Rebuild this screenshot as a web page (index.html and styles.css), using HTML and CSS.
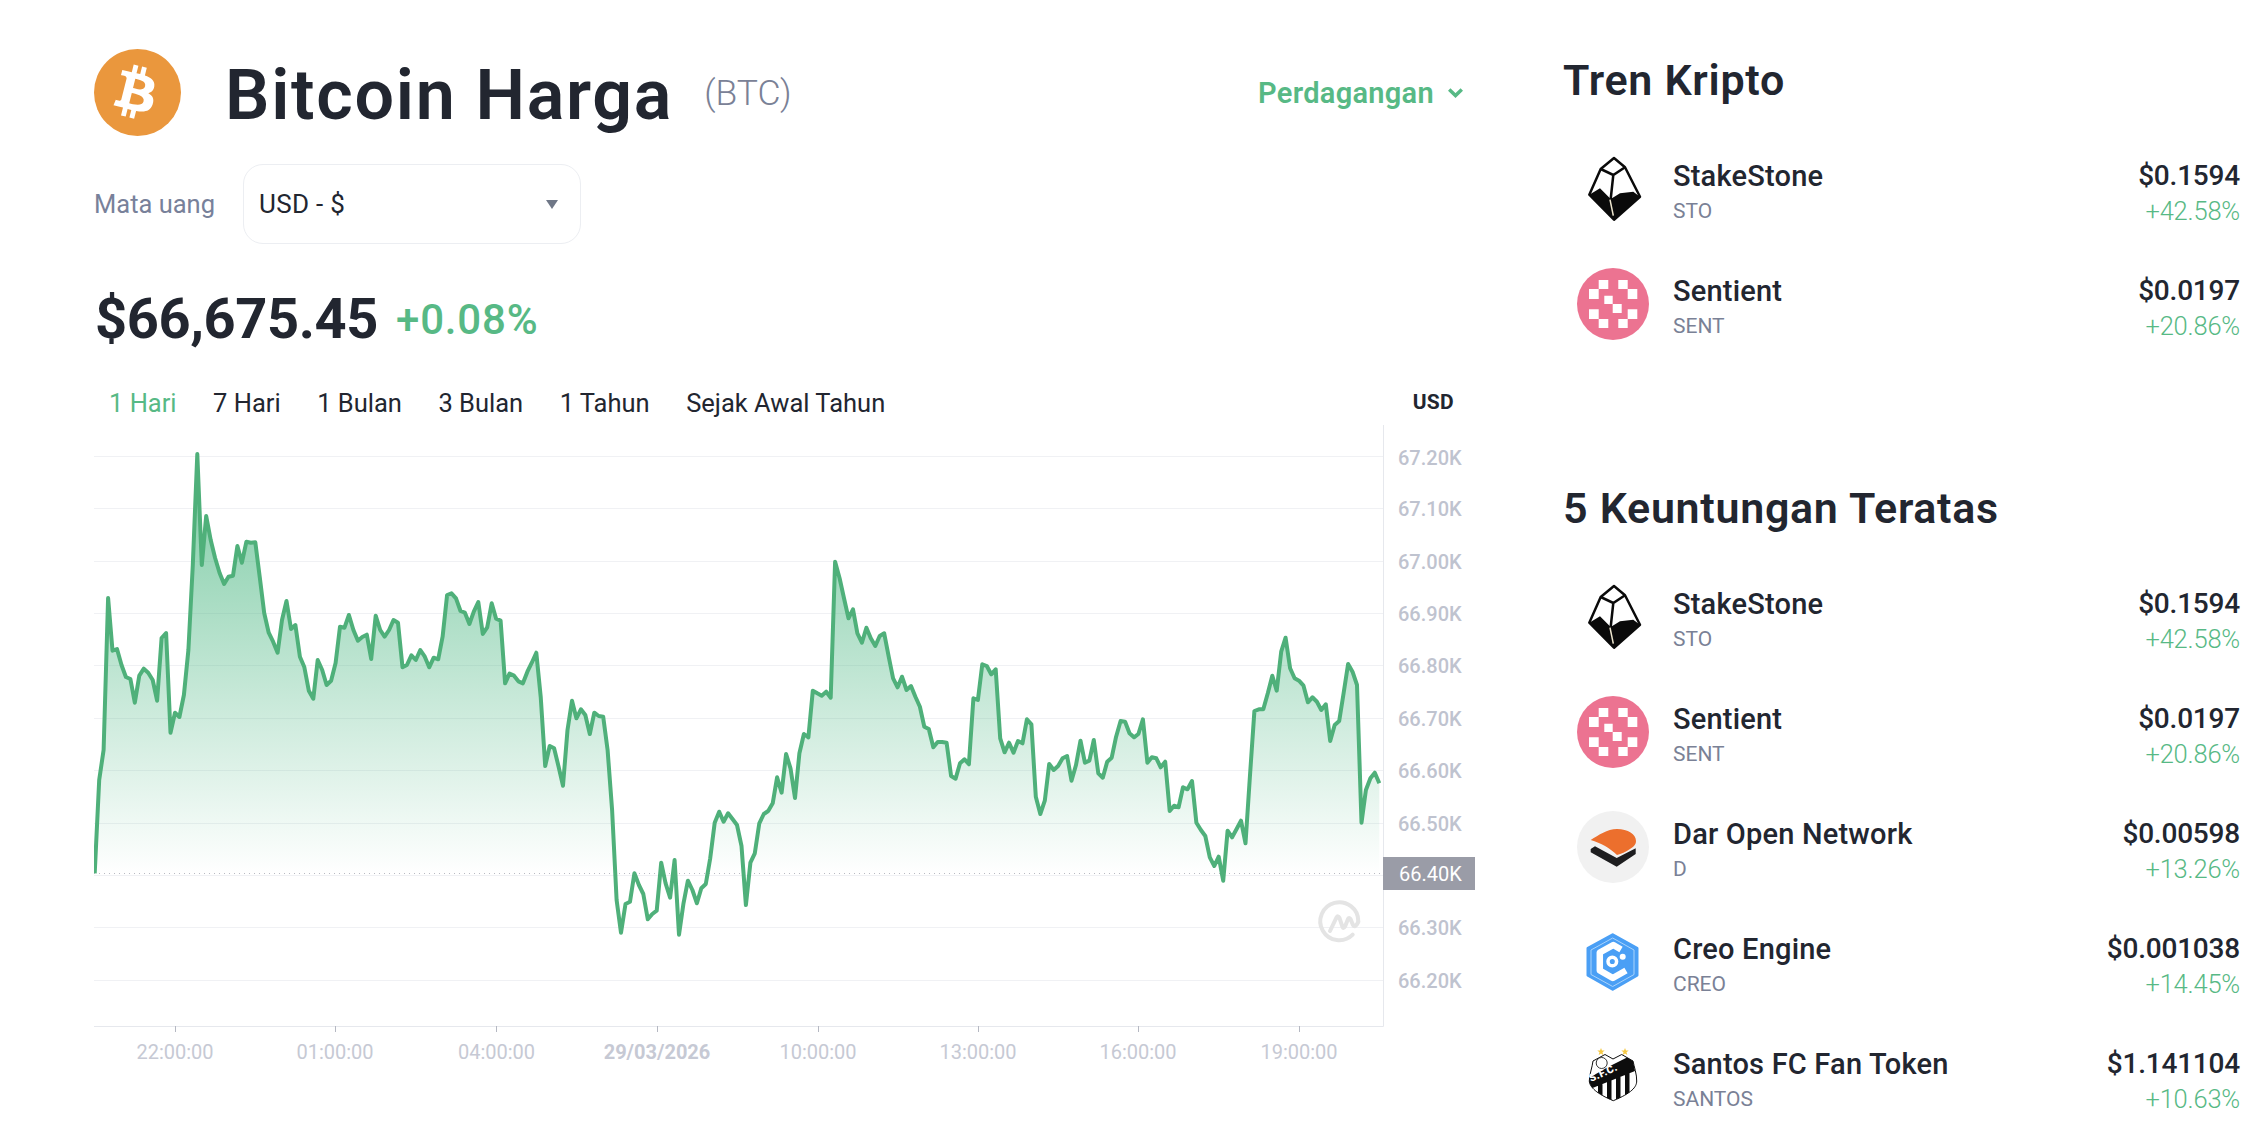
FILE: index.html
```html
<!DOCTYPE html>
<html lang="id">
<head>
<meta charset="utf-8">
<title>Bitcoin Harga</title>
<link rel="stylesheet" href="styles.css">
</head>
<body>
<main class="page">
  <section class="left">
    <header class="title-row">
      <svg class="coin" viewBox="0 0 87 87"><circle cx="43.5" cy="43.5" r="43.5" fill="#ea973d"/><path fill="#fff" d="M60.3 37.3c.9-5.7-3.5-8.8-9.4-10.8l1.9-7.700-4.700-1.200-1.900 7.500-3.700-.9 1.900-7.500-4.700-1.200-1.900 7.700-3-.7-6.500-1.600-1.300 5s3.500.8 3.400.9c1.900.5 2.200 1.700 2.200 2.700l-2.200 8.800-3.100 12.300c-.2.600-.8 1.400-2.100 1.100 0 .1-3.400-.9-3.400-.9l-2.300 5.400 6.100 1.500 3.400.9-2 7.800 4.700 1.200 1.900-7.700 3.700 1-1.900 7.600 4.700 1.200 2-7.800c8 1.500 14 .9 16.500-6.300 2-5.800-.1-9.200-4.300-11.400 3.100-.7 5.400-2.700 6-6.900zM49.600 52.300c-1.400 5.800-11.200 2.700-14.400 1.900l2.600-10.300c3.200.8 13.300 2.400 11.800 8.400zm1.500-15.100c-1.300 5.300-9.500 2.600-12.100 1.900l2.300-9.300c2.700.7 11.200 1.900 9.800 7.400z"/></svg>
      <h1 class="title">Bitcoin Harga</h1>
      <span class="symbol">(BTC)</span>
      <a class="trade">Perdagangan
        <svg class="chev" viewBox="0 0 15 10"><path d="M1.200 1.500L7.500 7.500l6.300-6" fill="none" stroke="currentColor" stroke-width="3.500"/></svg>
      </a>
    </header>
    <div class="currency-row">
      <span class="currency-label">Mata uang</span>
      <div class="select"><span>USD - $</span><i class="caret"></i></div>
    </div>
    <div class="price-row">
      <span class="price">$66,675.45</span>
      <span class="delta">+0.08%</span>
    </div>
    <div class="tabs-row">
      <nav class="tabs">
        <a class="tab active">1 Hari</a><a class="tab">7 Hari</a><a class="tab">1 Bulan</a><a class="tab">3 Bulan</a><a class="tab">1 Tahun</a><a class="tab">Sejak Awal Tahun</a>
      </nav>
      <span class="unit">USD</span>
    </div>
    <div class="chart">
      <svg class="plot" viewBox="94 425 1381 655" width="1381" height="655">
        <defs>
          <linearGradient id="area" gradientUnits="userSpaceOnUse" x1="0" y1="454" x2="0" y2="874">
            <stop offset="0" stop-color="#47b57f" stop-opacity=".72"/>
            <stop offset="1" stop-color="#47b57f" stop-opacity="0"/>
          </linearGradient>
        </defs>
        <g class="grid">
          <path d="M94 456.500H1383M94 508.500H1383M94 561.500H1383M94 613.500H1383M94 665.500H1383M94 718.500H1383M94 770.500H1383M94 823.500H1383M94 875.500H1383M94 927.500H1383M94 980.500H1383"/>
        </g>
        <path id="fill" fill="url(#area)"/>
        <path class="base" d="M94 873.500H1383"/>
        <path id="line" class="line"/>
        <g class="axis">
          <path d="M1383.500 425V1026.500H94"/>
          <path d="M175.500 1026V1032M335.500 1026V1032M496.500 1026V1032M657.500 1026V1032M818.500 1026V1032M978.500 1026V1032M1138.500 1026V1032M1299.500 1026V1032"/>
        </g>
        <g class="ylab">
          <text x="1398" y="465">67.20K</text><text x="1398" y="516">67.10K</text><text x="1398" y="569">67.00K</text><text x="1398" y="621">66.90K</text><text x="1398" y="673">66.80K</text><text x="1398" y="726">66.70K</text><text x="1398" y="778">66.60K</text><text x="1398" y="831">66.50K</text><text x="1398" y="935">66.30K</text><text x="1398" y="988">66.20K</text>
        </g>
        <rect class="tag" x="1383" y="857" width="92" height="33"/>
        <text class="tagtext" x="1399" y="881">66.40K</text>
        <g class="xlab">
          <text x="175" y="1059">22:00:00</text><text x="335" y="1059">01:00:00</text><text x="496.5" y="1059">04:00:00</text><text class="bold" x="657" y="1059">29/03/2026</text><text x="818" y="1059">10:00:00</text><text x="978" y="1059">13:00:00</text><text x="1138" y="1059">16:00:00</text><text x="1299" y="1059">19:00:00</text>
        </g>
        <g class="mark">
          <path d="M1352.700 934.700A19 19 0 1 1 1358.300 921.300"/>
          <path d="M1330 931L1336.500 917.500Q1338 915 1339.500 918L1342.500 927Q1343.500 929 1345 926.500L1348 919Q1349 917 1350.500 919L1353 925Q1355 928.500 1358.300 922"/>
        </g>
      </svg>
    </div>
  </section>

  <aside class="right">
    <h2 class="head">Tren Kripto</h2>
    <ul class="list">
      <li class="row">
        <svg class="ico" viewBox="0 0 72 72"><use href="#sto"/></svg>
        <div class="who"><b>StakeStone</b><small>STO</small></div>
        <div class="val"><b>$0.1594</b><small>+42.58%</small></div>
      </li>
      <li class="row">
        <svg class="ico" viewBox="0 0 72 72"><use href="#sent"/></svg>
        <div class="who"><b>Sentient</b><small>SENT</small></div>
        <div class="val"><b>$0.0197</b><small>+20.86%</small></div>
      </li>
    </ul>
    <h2 class="head second">5 Keuntungan Teratas</h2>
    <ul class="list">
      <li class="row">
        <svg class="ico" viewBox="0 0 72 72"><use href="#sto"/></svg>
        <div class="who"><b>StakeStone</b><small>STO</small></div>
        <div class="val"><b>$0.1594</b><small>+42.58%</small></div>
      </li>
      <li class="row">
        <svg class="ico" viewBox="0 0 72 72"><use href="#sent"/></svg>
        <div class="who"><b>Sentient</b><small>SENT</small></div>
        <div class="val"><b>$0.0197</b><small>+20.86%</small></div>
      </li>
      <li class="row">
        <svg class="ico" viewBox="0 0 72 72"><circle cx="36" cy="36" r="36" fill="#f1f1f1"/><path fill="#1d1d1f" d="M13.700 38L18 35.300 39.700 47 58.700 37.300V43L39.700 55.700 13.700 41.300z"/><path fill="#ec6f2d" d="M13.700 29C22 24 30 18 40 18c11 0 19 5 19 12 0 4-3 6-6 8-4 3-9 5-13 6C33 37 24 32 13.700 29z"/></svg>
        <div class="who"><b>Dar Open Network</b><small>D</small></div>
        <div class="val"><b>$0.00598</b><small>+13.26%</small></div>
      </li>
      <li class="row">
        <svg class="ico" viewBox="0 0 72 72"><path fill="#4a9ff5" stroke="#4a9ff5" stroke-width="3" stroke-linejoin="round" d="M35.700 8.700L60 22.300v27L35.700 63.300 11 49.300v-27z"/><path fill="none" stroke="#a9d3fb" stroke-width="1" d="M35.700 12L57 24v24.500L35.700 60.500 14 48.500V24z"/><path fill="none" stroke="#fff" stroke-width="6.500" stroke-linejoin="round" d="M44 23.500L36.300 19 22.800 26.500v18l13 7.500L49 44.500"/><circle cx="35.300" cy="35.500" r="4.300" fill="none" stroke="#fff" stroke-width="3.500"/><circle cx="45.700" cy="30.800" r="3" fill="#fff"/></svg>
        <div class="who"><b>Creo Engine</b><small>CREO</small></div>
        <div class="val"><b>$0.001038</b><small>+14.45%</small></div>
      </li>
      <li class="row">
        <svg class="ico" viewBox="0 0 72 72">
          <defs><clipPath id="shield"><path d="M16 20L28 13.500l8 4.500 8.700-4.500L56 20c1 5 4 14 3.700 20 0 6-5 12-23.400 19.700C20 53 12.500 46 12.300 40c0-6 3-14 3.700-20z"/></clipPath></defs>
          <path fill="#f5c842" d="M24 7l1 2.600h2.700l-2.200 1.700.8 2.700-2.300-1.600-2.300 1.600.8-2.700-2.200-1.700H23zM48 7l1 2.600h2.700l-2.200 1.700.8 2.700-2.300-1.600-2.300 1.600.8-2.700-2.200-1.700H47z"/>
          <g clip-path="url(#shield)"><path fill="#fff" d="M0 0h72v72H0z"/><path fill="#0d0d0d" d="M12 37L31 26l24-12 3 16-45 18zM12 40h4v24h-4zM21 40h4.500v24H21zM30 36h4.500v28H30zM39 32h4.500v32H39zM48 28h4.500v32H48z"/></g>
          <path fill="none" stroke="#0d0d0d" stroke-width="1" d="M16 20L28 13.500l8 4.500 8.700-4.500L56 20c1 5 4 14 3.700 20 0 6-5 12-23.400 19.700C20 53 12.500 46 12.300 40c0-6 3-14 3.700-20z"/>
          <circle cx="24.700" cy="22" r="5.500" fill="#fff" stroke="#333" stroke-width="1"/>
          <text class="sfc" x="14" y="41" transform="rotate(-24 14 41)">S.F.C.</text>
        </svg>
        <div class="who"><b>Santos FC Fan Token</b><small>SANTOS</small></div>
        <div class="val"><b>$1.141104</b><small>+10.63%</small></div>
      </li>
    </ul>
  </aside>
</main>
<svg class="defs" width="0" height="0">
  <symbol id="sto" viewBox="0 0 72 72">
    <path fill="#fff" stroke="#0a0a0a" stroke-width="2.500" stroke-linejoin="round" d="M37 5L48 14.300 63 43.700 37 66.700 12.300 41.700 23.700 16z"/>
    <path fill="none" stroke="#0a0a0a" stroke-width="2.500" d="M23.700 16l12.600 6L48 14.300M36.300 22L33.700 46"/>
    <path fill="#0a0a0a" d="M12.300 41.700L23 35.300l10.700 10.700L43 40.300l13.300-1.600 6.700 5L37 66.700z"/>
    <path stroke="#efe7cf" stroke-width="1.500" d="M33 46.700l3.300 16"/>
  </symbol>
  <symbol id="sent" viewBox="0 0 72 72">
    <circle cx="36" cy="36" r="36" fill="#ec7391"/>
    <path fill="#fff" d="M21.700 12h9.600v9h-9.600zM41.300 12h9.400v9h-9.400zM12 21h9.700v10H12zM50.700 21h9.600v10h-9.600zM27.300 27.700h8.400V36h-8.400zM35.700 36h9v9h-9zM12 41.300h9.700V51H12zM50.700 41.300h9.600V51h-9.600zM21.700 51h9.600v9h-9.600zM41.300 51h9.400v9h-9.400z"/>
  </symbol>
</svg>
<script src="script.js"></script>
</body>
</html>
```

FILE: styles.css
```css
* { box-sizing: border-box; }
html, body { margin: 0; height: 1142px; overflow: hidden; background: #fff; }
body { font-family: Roboto, "Noto Sans", sans-serif; color: #222630; }
.page { display: flex; padding: 49px 14px 0 94px; gap: 88px; }
.left { width: 1381px; flex: none; }
.right { flex: 1; min-width: 0; padding-top: 6px; }

.title-row { display: flex; align-items: center; height: 87px; }
.coin { width: 87px; height: 87px; flex: none; }
.title { margin: 0 0 0 44px; padding-top: 5px; font-size: 70px; font-weight: 600; letter-spacing: 1.7px; line-height: 87px; color: #222630; }
.symbol { margin-left: 31px; font-size: 35.5px; font-weight: 300; color: #7a8196; }
.trade { margin-left: auto; margin-right: 12px; display: flex; align-items: center; gap: 14px; color: #57b985; font-size: 29px; font-weight: 600; letter-spacing: .3px; }
.chev { width: 15px; height: 10px; }

.currency-row { display: flex; align-items: center; gap: 28px; margin-top: 28px; }
.currency-label { font-size: 25.5px; color: #78819a; }
.select { width: 338px; height: 80px; border: 1px solid #eceef2; border-radius: 20px; display: flex; align-items: center; justify-content: space-between; padding: 0 22px 0 15px; font-size: 26px; letter-spacing: .3px; color: #222630; }
.caret { width: 0; height: 0; border-left: 6px solid transparent; border-right: 6px solid transparent; border-top: 9px solid #6f7787; }

.price-row { display: flex; align-items: center; gap: 18px; margin-top: 39px; height: 72px; padding-left: 1px; }
.price { font-size: 56px; font-weight: 700; letter-spacing: -.4px; color: #222630; }
.delta { font-size: 42px; font-weight: 500; letter-spacing: .8px; color: #57b985; }

.tabs-row { display: flex; align-items: center; justify-content: space-between; margin-top: 26px; height: 44px; }
.tabs { display: flex; gap: 36.5px; padding-left: 15px; font-size: 25.5px; }
.tab { color: #222630; }
.tab.active { color: #57b985; }
.unit { margin-right: 21px; margin-bottom: 2px; font-size: 21px; font-weight: 700; letter-spacing: .3px; color: #222630; }

.chart { height: 655px; }
.plot { display: block; }
.grid path { stroke: #f0f1f4; stroke-width: 1; fill: none; }
.base { stroke: #b9bbc2; stroke-width: 1; stroke-dasharray: 1 4; fill: none; }
.line { fill: none; stroke: #4fb07a; stroke-width: 4; stroke-linejoin: round; }
.axis path { stroke: #e6e8ed; stroke-width: 1; fill: none; }
.axis path + path { stroke: #b5b8c2; }
.ylab text { font-size: 20px; font-weight: 500; fill: #bfc3cf; font-family: Roboto, sans-serif; }
.xlab text { font-size: 20px; fill: #c6c9d4; text-anchor: middle; font-family: Roboto, sans-serif; }
.xlab .bold { font-weight: 700; }
.tag { fill: #9a9ca7; }
.tagtext { font-size: 20px; fill: #fff; font-family: Roboto, sans-serif; }
.mark path { fill: none; stroke: #e4e4e4; stroke-width: 4; stroke-linecap: round; }
.sfc { font-size: 10.5px; font-weight: 900; fill: #fff; font-family: Roboto, sans-serif; letter-spacing: .4px; }

.head { margin: 0; font-size: 43px; font-weight: 600; letter-spacing: .7px; line-height: 50px; color: #222630; }
.second { margin-top: 122px; }
.list { list-style: none; margin: 0; padding: 0; }
.head + .list { margin-top: 26px; }
.row { display: flex; align-items: center; height: 115px; padding-left: 14px; }
.ico { width: 72px; height: 72px; flex: none; }
.who, .val { display: flex; flex-direction: column; gap: 5px; padding-top: 6px; }
.who { margin-left: 24px; flex: 1; }
.val { align-items: flex-end; }
.who b { font-size: 29px; font-weight: 500; letter-spacing: .2px; line-height: 34px; color: #222630; }
.who small { font-size: 21px; font-weight: 400; line-height: 26px; color: #7a8196; }
.val b { font-size: 28px; font-weight: 500; letter-spacing: -.2px; line-height: 34px; color: #222630; }
.val small { font-size: 25.5px; font-weight: 300; letter-spacing: -.2px; line-height: 26px; color: #57b985; }
.defs { position: absolute; }
```

FILE: script.js
```js
var ys = [873.3,780,750,598,650.7,649,665,677,679,702.7,675.7,668.7,672.7,680,700.7,638,633,732.7,712.7,717,695,650,565,454,565,516,540,558,573,584,576.7,575.7,546,562.7,541.7,542.7,542.3,576.7,613,632.7,641.7,652.7,620,601,629,625,656.7,667,690.7,698.7,660,670,685,680.7,663,626.7,627.7,615,630,640.7,637,634.7,659,615.7,630,636.7,630,620,622.7,667.3,665,655.3,660,650,656.7,667.3,657.7,659.3,636.7,595,593.3,598.3,611,612.7,624,611.7,602,634,627.3,603.3,618.7,620.7,683.3,673.7,675.7,681.3,683.3,671.7,662.7,652.7,696.7,766,746,748.3,766.7,785.7,730,700.7,718.3,709.3,715,734,712.7,716,716.7,750,810,900,932.7,904,901.7,873.3,885,894,919.3,914,910.7,862.7,883.3,897.7,860,934.7,903.3,880.7,890,903.3,888.3,884,858.3,822.7,811.7,821.7,813.3,819,825,846,905,862.7,853.3,823.3,814,811,803.3,777.3,792.7,754,768.3,798,753.3,734,737.3,690.7,693.3,695.7,691.7,697.7,561.7,578.3,598.3,618.3,609.3,633.3,642.7,627.7,638.3,646,636,633.3,656.7,678.3,687.3,676.7,690,686,696.7,706.7,726.7,729,747.3,742,742,742.7,776,778.7,763.3,759.3,764.3,698.3,700,664.3,666,674.3,669.3,738.3,752.3,742.7,752.7,741,743.3,719.3,724.3,796.7,814,800.7,764,770,766,758.3,756,780.7,765,740.7,762.7,760.7,740,773.3,777.7,761.7,757.7,736.7,721,721.7,733.3,737.3,734,719.3,762.7,757.3,758.3,767.3,761.7,811,805.7,807.3,787.3,789.3,781,822.7,830,836,857.3,866,856.7,880.7,830.7,837.3,829,820.7,843.3,776.7,711,709.3,709.3,693.3,675.7,690.7,651.7,637.7,668.3,678.3,680.7,685.7,702.3,697.3,701.7,710,704.3,741,725,721,693.3,664,671.7,685,822.7,790,778.3,772.7,783.3];
var x0 = 94.7, x1 = 1379.3, step = (x1 - x0) / (ys.length - 1);
var d = ys.map(function (y, i) { return (i ? "L" : "M") + (x0 + i * step).toFixed(1) + " " + y; }).join("");
document.getElementById("line").setAttribute("d", d);
document.getElementById("fill").setAttribute("d", d + "L" + x1 + " 873.5L" + x0 + " 873.5Z");
```
